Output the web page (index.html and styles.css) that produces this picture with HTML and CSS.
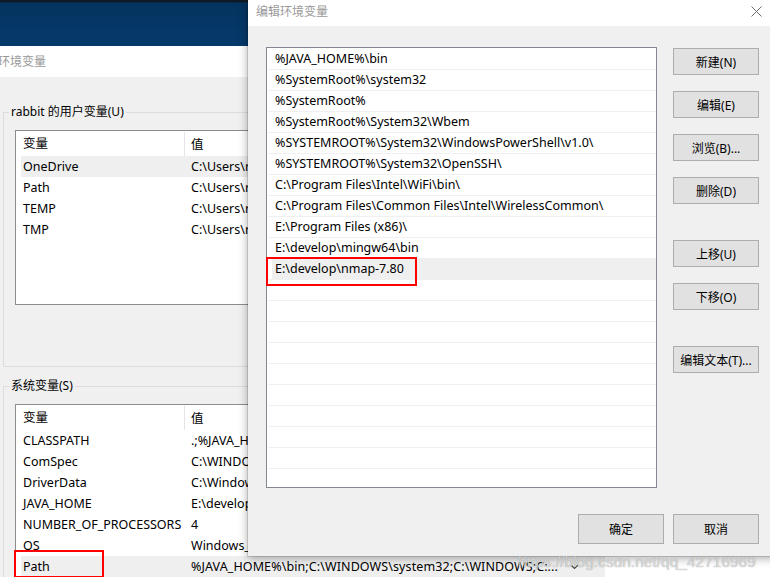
FILE: index.html
```html
<!DOCTYPE html>
<html lang="zh-CN">
<head>
<meta charset="utf-8">
<title>编辑环境变量</title>
<link rel="stylesheet" href="styles.css">
</head>
<body>
<div class="desktop">
  <div class="win back">
    <div class="back-title">环境变量</div>
    <div class="back-body">
      <fieldset class="group user-group">
        <legend>rabbit 的用户变量(U)</legend>
        <div class="listview user-list">
          <div class="lv-head"><span class="c1">变量</span><span class="c2">值</span></div>
          <div class="lv-row hot"><span class="c1">OneDrive</span><span class="c2">C:\Users\rabbit\OneDrive</span></div>
          <div class="lv-row"><span class="c1">Path</span><span class="c2">C:\Users\rabbit\AppData\Local\Microsoft\WindowsApps;</span></div>
          <div class="lv-row"><span class="c1">TEMP</span><span class="c2">C:\Users\rabbit\AppData\Local\Temp</span></div>
          <div class="lv-row"><span class="c1">TMP</span><span class="c2">C:\Users\rabbit\AppData\Local\Temp</span></div>
        </div>
      </fieldset>
      <fieldset class="group sys-group">
        <legend>系统变量(S)</legend>
        <div class="listview sys-list">
          <div class="lv-head"><span class="c1">变量</span><span class="c2">值</span></div>
          <div class="lv-row"><span class="c1">CLASSPATH</span><span class="c2">.;%JAVA_HOME%\lib;%JAVA_HOME%\lib\tools.jar</span></div>
          <div class="lv-row"><span class="c1">ComSpec</span><span class="c2">C:\WINDOWS\system32\cmd.exe</span></div>
          <div class="lv-row"><span class="c1">DriverData</span><span class="c2">C:\Windows\System32\Drivers\DriverData</span></div>
          <div class="lv-row"><span class="c1">JAVA_HOME</span><span class="c2">E:\develop\jdk1.8</span></div>
          <div class="lv-row"><span class="c1">NUMBER_OF_PROCESSORS</span><span class="c2">4</span></div>
          <div class="lv-row"><span class="c1">OS</span><span class="c2">Windows_NT</span></div>
          <div class="lv-row hot path-row"><span class="c1">Path</span><span class="c2 path-val"><span class="val-text">%JAVA_HOME%\bin;C:\WINDOWS\system32;C:\WINDOWS;C:...</span><span class="drop"><svg width="9" height="6" viewBox="0 0 9 6"><path d="M1 1 L4.5 4.5 L8 1" fill="none" stroke="#444" stroke-width="1.2"/></svg></span></span></div>
          <div class="mark mark-path"></div>
        </div>
      </fieldset>
    </div>
  </div>

  <div class="win front">
    <div class="front-title">
      <span class="title-text">编辑环境变量</span>
      <svg class="close" width="11" height="11" viewBox="0 0 11 11"><path d="M0.5 0.5 L10.5 10.5 M10.5 0.5 L0.5 10.5" stroke="#6e6e6e" stroke-width="1" fill="none"/></svg>
    </div>
    <div class="front-body">
      <div class="main">
        <div class="pathlist">
          <div class="prow">%JAVA_HOME%\bin</div>
          <div class="prow">%SystemRoot%\system32</div>
          <div class="prow">%SystemRoot%</div>
          <div class="prow">%SystemRoot%\System32\Wbem</div>
          <div class="prow">%SYSTEMROOT%\System32\WindowsPowerShell\v1.0\</div>
          <div class="prow">%SYSTEMROOT%\System32\OpenSSH\</div>
          <div class="prow">C:\Program Files\Intel\WiFi\bin\</div>
          <div class="prow">C:\Program Files\Common Files\Intel\WirelessCommon\</div>
          <div class="prow">E:\Program Files (x86)\</div>
          <div class="prow">E:\develop\mingw64\bin</div>
          <div class="prow sel">E:\develop\nmap-7.80</div>
          <div class="prow"></div>
          <div class="prow"></div>
          <div class="prow"></div>
          <div class="prow"></div>
          <div class="prow"></div>
          <div class="prow"></div>
          <div class="prow"></div>
          <div class="prow"></div>
          <div class="prow"></div>
          <div class="mark mark-nmap"></div>
        </div>
        <div class="side">
          <button class="btn">新建(N)</button>
          <button class="btn">编辑(E)</button>
          <button class="btn">浏览(B)...</button>
          <button class="btn">删除(D)</button>
          <button class="btn spaced">上移(U)</button>
          <button class="btn">下移(O)</button>
          <button class="btn spaced">编辑文本(T)...</button>
        </div>
      </div>
      <div class="footer">
        <button class="btn big">确定</button>
        <button class="btn big">取消</button>
      </div>
    </div>
  </div>

  <div class="watermark">https://blog.csdn.net/qq_42716969</div>
</div>
</body>
</html>
```

FILE: styles.css
```css
* { box-sizing: border-box; }
html, body { margin: 0; padding: 0; }
body {
  width: 770px;
  height: 577px;
  overflow: hidden;
  font-family: "Noto Sans", "Noto Sans CJK SC", sans-serif;
  font-size: 12.5px;
  color: #000;
}
.desktop {
  position: relative;
  width: 770px;
  height: 577px;
  overflow: hidden;
  background: linear-gradient(#0e1a26 0, #0e1a26 2px, #04335f 3px, #063a6c 46px, #063a6c 100%);
}

/* ---------- back window ---------- */
.back {
  position: absolute;
  left: -10px;
  top: 46px;
  width: 800px;
  height: 560px;
  background: #f0f0f0;
}
.back-title {
  height: 31px;
  line-height: 31px;
  background: #fff;
  color: #999;
  padding-left: 8px;
  font-size: 12px;
}
.back-body { padding-top: 27px; }
.group {
  margin: 0 0 0 13px;
  border: 1px solid #dcdcdc;
  padding: 10px 0 61px 11px;
  width: 790px;
  min-width: 0;
}
.group legend {
  padding: 0 2px;
  margin-left: -6px;
  line-height: 16px;
  font-size: 12px;
}
.sys-group { margin-top: 11px; padding-top: 10px; }
.listview {
  position: relative;
  background: #fff;
  border: 1px solid #8c8c8c;
  width: 770px;
}
.user-list { height: 175px; }
.sys-list { height: 220px; }
.lv-head { display: flex; height: 25px; align-items: center; }
.lv-head .c1 {
  width: 169px;
  flex: none;
  padding-left: 7px;
  border-right: 1px solid #e5e5e5;
  height: 24px;
  line-height: 24px;
}
.lv-head .c2 { padding-left: 6px; }
.lv-row {
  display: flex;
  height: 21px;
  line-height: 21px;
  margin-left: 5px;
  white-space: nowrap;
}
.lv-row .c1 { width: 170px; flex: none; padding-left: 2px; }
.lv-row .c2 { flex: 1; overflow: hidden; }
.lv-row.hot { background: #efefef; }
.lv-row.path-row { width: 584px; }
.path-val { display: flex; align-items: center; }
.val-text { letter-spacing: 0.1px; }
.drop {
  display: flex;
  align-items: center;
  justify-content: center;
  width: 14px;
  height: 17px;
  margin-left: 10px;
}
.mark {
  position: absolute;
  border: 2px solid #f00;
}
.mark-path { left: -2px; top: 145px; width: 90px; height: 28px; }

/* ---------- front dialog ---------- */
.front {
  position: absolute;
  left: 248px;
  top: 0;
  width: 530px;
  height: 556px;
  background: #f0f0f0;
  box-shadow: 0 0 0 1px rgba(0,0,0,0.12), 0 2px 9px rgba(0,0,0,0.35);
}
.front-title {
  height: 26px;
  background: #fff;
  display: flex;
  align-items: center;
  justify-content: space-between;
  padding: 0 16px 4px 8px;
  color: #999;
  font-size: 12px;
}
.front-body { padding: 21px 0 0 18px; }
.main { display: flex; }
.pathlist {
  position: relative;
  width: 391px;
  height: 441px;
  border: 1px solid #828790;
  background: #fff;
  padding-top: 1px;
}
.prow {
  height: 21px;
  line-height: 20px;
  padding-top: 0;
  margin-left: 1px;
  padding-left: 7px;
  border-bottom: 1px solid #f0f0f0;
  white-space: nowrap;
}
.prow.sel { background: linear-gradient(to right, transparent 4px, #efefef 4px); }
.mark-nmap { left: -1px; top: 209px; width: 151px; height: 29px; }
.side {
  margin-left: 16px;
  padding-top: 1px;
  display: flex;
  flex-direction: column;
  gap: 16px;
}
.btn {
  width: 86px;
  height: 27px;
  padding: 0;
  background: #e1e1e1;
  border: 1px solid #adadad;
  font: inherit;
  font-size: 12px;
  color: #000;
  display: flex;
  align-items: center;
  justify-content: center;
}
.btn.spaced { margin-top: 20px; }
.footer {
  width: 493px;
  margin-top: 26px;
  display: flex;
  justify-content: flex-end;
  gap: 9px;
}
.btn.big { height: 30px; }

.watermark {
  position: absolute;
  left: 518px;
  top: 553px;
  font-family: "Liberation Sans", sans-serif;
  font-size: 15.5px;
  color: rgba(255,255,255,0.6);
  text-shadow: 0 0 1px rgba(110,110,110,0.8);
  white-space: nowrap;
}
```
